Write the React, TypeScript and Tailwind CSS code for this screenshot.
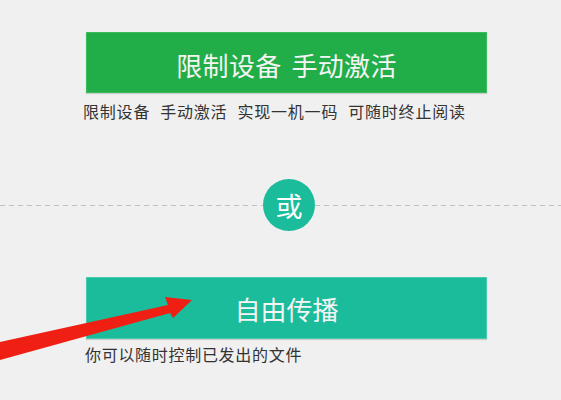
import React from "react";

const cjk = { fontFamily: '"Noto Sans CJK SC", "Noto Sans", sans-serif' };

export default function App() {
  return (
    <div
      className="relative w-[561px] h-[400px] overflow-hidden bg-[#f0f0f0]"
      style={cjk}
    >
      <div className="pt-[32px] flex flex-col">
        <div className="ml-[86px] w-[401px] h-[61px] bg-[#21ae48] border border-[#3fbb5f] shadow-[0_1px_1px_rgba(0,0,0,0.15)] flex items-center justify-center gap-[10px] text-[26px] tracking-[0.3px] text-[#f4f4f4] leading-none pt-[4px]">
          <span>限制设备</span>
          <span>手动激活</span>
        </div>
        <div className="ml-[83px] mt-[6px] h-6 flex items-center gap-[10px] text-[16px] tracking-[0.8px] text-[#333333] leading-6">
          <span>限制设备</span>
          <span>手动激活</span>
          <span>实现一机一码</span>
          <span>可随时终止阅读</span>
        </div>

        <div className="mt-[56px] h-[52px] flex items-center">
          <div className="w-[263px] h-px bg-[repeating-linear-gradient(to_right,#c2c2c2_0_5px,transparent_5px_9px)]" />
          <div className="w-[52px] h-[52px] rounded-full bg-[#1bbc9b] flex items-center justify-center text-[27px] text-white leading-none font-normal">
            或
          </div>
          <div className="flex-1 h-px bg-[repeating-linear-gradient(to_right,#c2c2c2_0_5px,transparent_5px_9px)]" />
        </div>

        <div className="ml-[86px] mt-[46px] w-[401px] h-[62px] bg-[#1bbc9b] border border-[#4ccab0] shadow-[0_1px_1px_rgba(0,0,0,0.15)] flex items-center justify-center text-[26px] text-[#f4f4f4] leading-none pt-[2px]">
          自由传播
        </div>
        <div className="ml-[85px] mt-[3px] h-6 text-[16px] tracking-[0.7px] text-[#333333] leading-6">
          你可以随时控制已发出的文件
        </div>
      </div>

      <svg
        className="absolute left-0 top-0 pointer-events-none"
        width="561"
        height="400"
        viewBox="0 0 561 400"
      >
        <polygon
          points="-10,344.2 168,305 165,297 192,300 173,318 170,313 -10,362.8"
          fill="#ef1f14"
        />
      </svg>
    </div>
  );
}
